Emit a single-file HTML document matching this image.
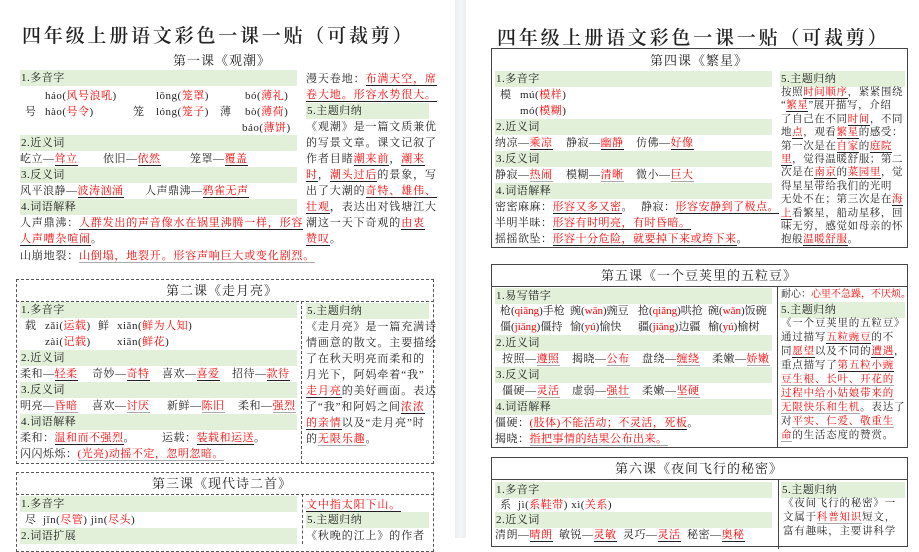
<!DOCTYPE html>
<html><head><meta charset="utf-8">
<style>
*{margin:0;padding:0;box-sizing:border-box}
body{width:919px;height:538px;overflow:hidden;background:#fff;position:relative;font-family:"Liberation Serif","Noto Serif CJK SC",serif;color:#222}
.gut{position:absolute;left:455px;top:0;width:11px;height:538px;background:linear-gradient(90deg,#eceef2,#f4f5f8,#eceef2)}
.l{position:absolute;white-space:nowrap;font-size:11px;line-height:16px;letter-spacing:.5px}
.g{position:absolute;background:#e2efd9;height:16px;line-height:16px;font-size:11px;white-space:nowrap;padding-left:1px;letter-spacing:.5px}
.r{color:#f00;border-bottom:1px solid #222}
.rg{color:#f00;border-bottom:1px solid #aaa}
.rd{color:#f00}
.t{position:absolute;font-size:19px;letter-spacing:2.8px;white-space:nowrap;font-weight:600;line-height:24px;font-family:"Noto Serif CJK SC",serif}
.h{position:absolute;font-size:13px;line-height:20px;white-space:nowrap;text-align:center;letter-spacing:1px}
.bx{position:absolute;border:1px dashed #555}
.bs{position:absolute;border:1px solid #444}
.hl{position:absolute;height:0;border-top:1px dashed #555}
.vl{position:absolute;width:0;border-left:1px dashed #555}
.hs{position:absolute;height:0;border-top:1px solid #444}
.vs{position:absolute;width:0;border-left:1px solid #444}
.rc .l{letter-spacing:.9px}
.s13 .l{line-height:13.4px;font-size:10.5px;letter-spacing:.6px}
.s14 .l{line-height:14px;font-size:10.5px;letter-spacing:.8px}
</style></head><body>
<div class="gut"></div>

<!-- LEFT PAGE -->
<div class="t" style="left:22px;top:23px">四年级上册语文彩色一课一贴（可裁剪）</div>
<div class="h" style="left:122px;top:51px;width:200px">第一课《观潮》</div>
<div class="g" style="left:20px;top:70px;width:277px">1.多音字</div>
<div class="l" style="left:45px;top:88px">háo(<span class="rd">风号浪吼</span>)</div>
<div class="l" style="left:156px;top:88px">lōng(<span class="rd">笼罩</span>)</div>
<div class="l" style="left:245px;top:88px">bó(<span class="rd">薄礼</span>)</div>
<div class="l" style="left:25px;top:104px">号</div>
<div class="l" style="left:45px;top:104px">hào(<span class="rd">号令</span>)</div>
<div class="l" style="left:133px;top:104px">笼</div>
<div class="l" style="left:156px;top:104px">lóng(<span class="rd">笼子</span>)</div>
<div class="l" style="left:220px;top:104px">薄</div>
<div class="l" style="left:245px;top:104px">bò(<span class="rd">薄荷</span>)</div>
<div class="l" style="left:242px;top:120px">báo(<span class="rd">薄饼</span>)</div>
<div class="g" style="left:20px;top:135px;width:277px">2.近义词</div>
<div class="l" style="left:20px;top:151px">屹立—<span class="r">耸立</span></div>
<div class="l" style="left:103px;top:151px">依旧—<span class="r">依然</span></div>
<div class="l" style="left:190px;top:151px">笼罩—<span class="r">覆盖</span></div>
<div class="g" style="left:20px;top:167px;width:277px">3.反义词</div>
<div class="l" style="left:20px;top:183px">风平浪静—<span class="r">波涛汹涌</span></div>
<div class="l" style="left:145px;top:183px">人声鼎沸—<span class="r">鸦雀无声</span></div>
<div class="g" style="left:20px;top:199px;width:277px">4.词语解释</div>
<div class="l" style="left:20px;top:215px;letter-spacing:.8px">人声鼎沸：<span class="r">人群发出的声音像水在锅里沸腾一样，形容</span></div>
<div class="l" style="left:20px;top:231px;letter-spacing:.8px"><span class="r">人声嘈杂喧闹</span>。</div>
<div class="l" style="left:20px;top:248px;letter-spacing:.8px">山崩地裂：<span class="rg">山倒塌，地裂开。形容声响巨大或变化剧烈。</span></div>
<div class="rc">
<div class="l" style="left:306px;top:71px">漫天卷地：<span class="r">布满天空，席</span></div>
<div class="l" style="left:306px;top:87px"><span class="r">卷大地。形容水势很大。</span></div>
<div class="g" style="left:306px;top:103px;width:123px">5.主题归纳</div>
<div class="l" style="left:306px;top:119px">《观潮》是一篇文质兼优</div>
<div class="l" style="left:306px;top:135px">的写景文章。课文记叙了</div>
<div class="l" style="left:306px;top:151px">作者目睹<span class="r">潮来前</span>，<span class="r">潮来</span></div>
<div class="l" style="left:306px;top:167px"><span class="r">时</span>，<span class="r">潮头过后</span>的景象，写</div>
<div class="l" style="left:306px;top:183px">出了大潮的<span class="r">奇特、雄伟、</span></div>
<div class="l" style="left:306px;top:199px"><span class="r">壮观</span>，表达出对钱塘江大</div>
<div class="l" style="left:306px;top:215px">潮这一天下奇观的<span class="r">由衷</span></div>
<div class="l" style="left:306px;top:231px"><span class="r">赞叹</span>。</div>
</div>

<!-- Lesson 2 -->
<div class="bx" style="left:16px;top:279px;width:418px;height:185px"></div>
<div class="h" style="left:122px;top:281px;width:200px">第二课《走月亮》</div>
<div class="hl" style="left:16px;top:301px;width:418px"></div>
<div class="vl" style="left:301px;top:301px;height:163px"></div>
<div class="g" style="left:20px;top:302px;width:277px">1.多音字</div>
<div class="l" style="left:25px;top:318px">载</div>
<div class="l" style="left:45px;top:318px">zǎi(<span class="rd">运载</span>)</div>
<div class="l" style="left:98px;top:318px">鲜</div>
<div class="l" style="left:117px;top:318px">xiǎn(<span class="rd">鲜为人知</span>)</div>
<div class="l" style="left:45px;top:334px">zài(<span class="rd">记载</span>)</div>
<div class="l" style="left:117px;top:334px">xiān(<span class="rd">鲜花</span>)</div>
<div class="g" style="left:20px;top:350px;width:277px">2.近义词</div>
<div class="l" style="left:20px;top:366px">柔和—<span class="r">轻柔</span></div>
<div class="l" style="left:92px;top:366px">奇妙—<span class="r">奇特</span></div>
<div class="l" style="left:162px;top:366px">喜欢—<span class="r">喜爱</span></div>
<div class="l" style="left:232px;top:366px">招待—<span class="r">款待</span></div>
<div class="g" style="left:20px;top:382px;width:277px">3.反义词</div>
<div class="l" style="left:20px;top:398px">明亮—<span class="rg">昏暗</span></div>
<div class="l" style="left:92px;top:398px">喜欢—<span class="rg">讨厌</span></div>
<div class="l" style="left:167px;top:398px">新鲜—<span class="rg">陈旧</span></div>
<div class="l" style="left:238px;top:398px">柔和—<span class="rg">强烈</span></div>
<div class="g" style="left:20px;top:414px;width:277px">4.词语解释</div>
<div class="l" style="left:20px;top:430px">柔和：<span class="r">温和而不强烈</span>。</div>
<div class="l" style="left:162px;top:430px">运载：<span class="r">装载和运送</span>。</div>
<div class="l" style="left:20px;top:446px">闪闪烁烁：<span class="rg">(光亮)动摇不定，忽明忽暗。</span></div>
<div class="rc">
<div class="g" style="left:306px;top:303px;width:123px">5.主题归纳</div>
<div class="l" style="left:306px;top:319px">《走月亮》是一篇充满诗</div>
<div class="l" style="left:306px;top:335px">情画意的散文。主要描绘</div>
<div class="l" style="left:306px;top:351px">了在秋天明亮而柔和的</div>
<div class="l" style="left:306px;top:367px">月光下，阿妈牵着“我”</div>
<div class="l" style="left:306px;top:383px"><span class="r">走月亮</span>的美好画面。表达</div>
<div class="l" style="left:306px;top:399px">了“我”和阿妈之间<span class="r">浓浓</span></div>
<div class="l" style="left:306px;top:415px"><span class="r">的亲情</span>以及“走月亮”时</div>
<div class="l" style="left:306px;top:431px">的<span class="rg">无限乐趣</span>。</div>
</div>

<!-- Lesson 3 -->
<div class="bx" style="left:16px;top:472px;width:418px;height:80px"></div>
<div class="h" style="left:122px;top:474px;width:200px">第三课《现代诗二首》</div>
<div class="hl" style="left:16px;top:494px;width:418px"></div>
<div class="vl" style="left:302px;top:494px;height:50px"></div>
<div class="g" style="left:20px;top:496px;width:277px">1.多音字</div>
<div class="l" style="left:25px;top:512px">尽&nbsp; jǐn(<span class="rd">尽管</span>) jìn(<span class="rd">尽头</span>)</div>
<div class="g" style="left:20px;top:528px;width:277px">2.词语扩展</div>
<div class="rc">
<div class="l" style="left:306px;top:497px"><span class="r">文中指太阳下山。</span></div>
<div class="g" style="left:306px;top:512px;width:123px">5.主题归纳</div>
<div class="l" style="left:306px;top:528px">《秋晚的江上》的作者</div>
</div>

<!-- RIGHT PAGE -->
<div class="t" style="left:497px;top:25px">四年级上册语文彩色一课一贴（可裁剪）</div>
<div class="bs" style="left:491px;top:48px;width:417px;height:200px"></div>
<div class="h" style="left:599px;top:51px;width:200px">第四课《繁星》</div>
<div class="g" style="left:495px;top:71px;width:277px">1.多音字</div>
<div class="l" style="left:500px;top:87px">模</div>
<div class="l" style="left:520px;top:87px">mú(<span class="rd">模样</span>)</div>
<div class="l" style="left:520px;top:103px">mó(<span class="rd">模糊</span>)</div>
<div class="g" style="left:495px;top:119px;width:277px">2.近义词</div>
<div class="l" style="left:495px;top:135px">纳凉—<span class="r">乘凉</span></div>
<div class="l" style="left:566px;top:135px">静寂—<span class="r">幽静</span></div>
<div class="l" style="left:636px;top:135px">仿佛—<span class="r">好像</span></div>
<div class="g" style="left:495px;top:151px;width:277px">3.反义词</div>
<div class="l" style="left:495px;top:167px">静寂—<span class="rg">热闹</span></div>
<div class="l" style="left:566px;top:167px">模糊—<span class="rg">清晰</span></div>
<div class="l" style="left:636px;top:167px">微小—<span class="rg">巨大</span></div>
<div class="g" style="left:495px;top:183px;width:277px">4.词语解释</div>
<div class="l" style="left:495px;top:199px">密密麻麻：<span class="r">形容又多又密</span>。</div>
<div class="l" style="left:641px;top:199px">静寂：<span class="r">形容安静到了极点。</span></div>
<div class="l" style="left:495px;top:215px">半明半昧：<span class="r">形容有时明亮，有时昏暗。</span></div>
<div class="l" style="left:495px;top:231px">摇摇欲坠：<span class="r">形容十分危险，就要掉下来或垮下来</span>。</div>
<div class="g" style="left:780px;top:71px;width:125px">5.主题归纳</div>
<div class="s13">
<div class="l" style="left:781px;top:86px">按照<span class="r">时间顺序</span>，紧紧围绕</div>
<div class="l" style="left:781px;top:99.4px">“<span class="r">繁星</span>”展开描写，介绍</div>
<div class="l" style="left:781px;top:112.8px">了自己在不同<span class="r">时间</span>，不同</div>
<div class="l" style="left:781px;top:126.2px">地<span class="r">点</span>，观看<span class="r">繁星</span>的感受：</div>
<div class="l" style="left:781px;top:139.6px">第一次是在<span class="r">自家</span>的<span class="r">庭院</span></div>
<div class="l" style="left:781px;top:153px"><span class="r">里</span>，觉得温暖舒服；第二</div>
<div class="l" style="left:781px;top:166.4px">次是在<span class="r">南京</span>的<span class="r">菜园里</span>，觉</div>
<div class="l" style="left:781px;top:179.8px">得星星带给我们的光明</div>
<div class="l" style="left:781px;top:193.2px">无处不在；第三次是在<span class="r">海</span></div>
<div class="l" style="left:781px;top:206.6px"><span class="r">上</span>看繁星，船动星移，回</div>
<div class="l" style="left:781px;top:220px">味无穷，感觉如母亲的怀</div>
<div class="l" style="left:781px;top:233.4px">抱般<span class="r">温暖舒服</span>。</div>
</div>

<!-- Lesson 5 -->
<div class="bs" style="left:491px;top:264px;width:417px;height:184px"></div>
<div class="h" style="left:549px;top:266px;width:300px">第五课《一个豆荚里的五粒豆》</div>
<div class="hs" style="left:491px;top:286px;width:417px"></div>
<div class="vs" style="left:777px;top:286px;height:162px"></div>
<div class="g" style="left:495px;top:288px;width:277px">1.易写错字</div>
<div class="l" style="left:500px;top:303px;letter-spacing:0">枪(<span class="rd">qiāng</span>)手枪</div>
<div class="l" style="left:570px;top:303px;letter-spacing:0">豌(<span class="rd">wān</span>)豌豆</div>
<div class="l" style="left:638px;top:303px;letter-spacing:0">抢(<span class="rd">qiǎng</span>)哄抢</div>
<div class="l" style="left:708px;top:303px;letter-spacing:0">碗(<span class="rd">wǎn</span>)饭碗</div>
<div class="l" style="left:500px;top:319px;letter-spacing:0">僵(<span class="rd">jiāng</span>)僵持</div>
<div class="l" style="left:570px;top:319px;letter-spacing:0">愉(<span class="rd">yú</span>)愉快</div>
<div class="l" style="left:638px;top:319px;letter-spacing:0">疆(<span class="rd">jiāng</span>)边疆</div>
<div class="l" style="left:708px;top:319px;letter-spacing:0">榆(<span class="rd">yú</span>)榆树</div>
<div class="g" style="left:495px;top:335px;width:277px">2.近义词</div>
<div class="l" style="left:502px;top:351px">按照—<span class="rg">遵照</span></div>
<div class="l" style="left:572px;top:351px">揭晓—<span class="rg">公布</span></div>
<div class="l" style="left:642px;top:351px">盘绕—<span class="rg">缠绕</span></div>
<div class="l" style="left:712px;top:351px">柔嫩—<span class="rg">娇嫩</span></div>
<div class="g" style="left:495px;top:367px;width:277px">3.反义词</div>
<div class="l" style="left:502px;top:383px">僵硬—<span class="rg">灵活</span></div>
<div class="l" style="left:572px;top:383px">虚弱—<span class="rg">强壮</span></div>
<div class="l" style="left:642px;top:383px">柔嫩—<span class="rg">坚硬</span></div>
<div class="g" style="left:495px;top:399px;width:277px">4.词语解释</div>
<div class="l" style="left:495px;top:415px">僵硬：<span class="r">(肢体)不能活动；不灵活，死板</span>。</div>
<div class="l" style="left:495px;top:431px">揭晓：<span class="rg">指把事情的结果公布出来。</span></div>
<div class="l" style="left:781px;top:287px;font-size:10px;letter-spacing:0">耐心：<span class="rd">心里不急躁，不厌烦。</span></div>
<div class="g" style="left:780px;top:302px;width:125px">5.主题归纳</div>
<div class="s14">
<div class="l" style="left:781px;top:317px">《一个豆荚里的五粒豆》</div>
<div class="l" style="left:781px;top:331px">通过描写<span class="r">五粒豌豆</span>的不</div>
<div class="l" style="left:781px;top:345px">同<span class="r">愿望</span>以及不同的<span class="r">遭遇</span>，</div>
<div class="l" style="left:781px;top:359px">重点描写了<span class="r">第五粒小豌</span></div>
<div class="l" style="left:781px;top:373px"><span class="rg">豆生根、长叶、开花的</span></div>
<div class="l" style="left:781px;top:387px"><span class="rg">过程中给小姑娘带来的</span></div>
<div class="l" style="left:781px;top:401px"><span class="rg">无限快乐和生机</span>。表达了</div>
<div class="l" style="left:781px;top:415px">对<span class="rg">平实、仁爱、敬重生</span></div>
<div class="l" style="left:781px;top:429px"><span class="rg">命</span>的生活态度的赞赏。</div>
</div>

<!-- Lesson 6 -->
<div class="bs" style="left:491px;top:457px;width:417px;height:90px"></div>
<div class="h" style="left:549px;top:459px;width:300px">第六课《夜间飞行的秘密》</div>
<div class="hs" style="left:491px;top:479px;width:417px"></div>
<div class="vs" style="left:778px;top:479px;height:70px"></div>
<div class="g" style="left:495px;top:482px;width:277px">1.多音字</div>
<div class="l" style="left:500px;top:497px">系&nbsp; jì(<span class="rd">系鞋带</span>) xì(<span class="rd">关系</span>)</div>
<div class="g" style="left:495px;top:512px;width:277px">2.近义词</div>
<div class="l" style="left:495px;top:527px">清朗—<span class="r">晴朗</span>&nbsp; 敏锐—<span class="r">灵敏</span>&nbsp; 灵巧—<span class="r">灵活</span>&nbsp; 秘密—<span class="r">奥秘</span></div>
<div class="g" style="left:781px;top:482px;width:124px">5.主题归纳</div>
<div class="s14">
<div class="l" style="left:783px;top:497px">《夜间飞行的秘密》一</div>
<div class="l" style="left:783px;top:511px">文属于<span class="rg">科普知识</span>短文，</div>
<div class="l" style="left:783px;top:525px">富有趣味，主要讲科学</div>
</div>
</body></html>
